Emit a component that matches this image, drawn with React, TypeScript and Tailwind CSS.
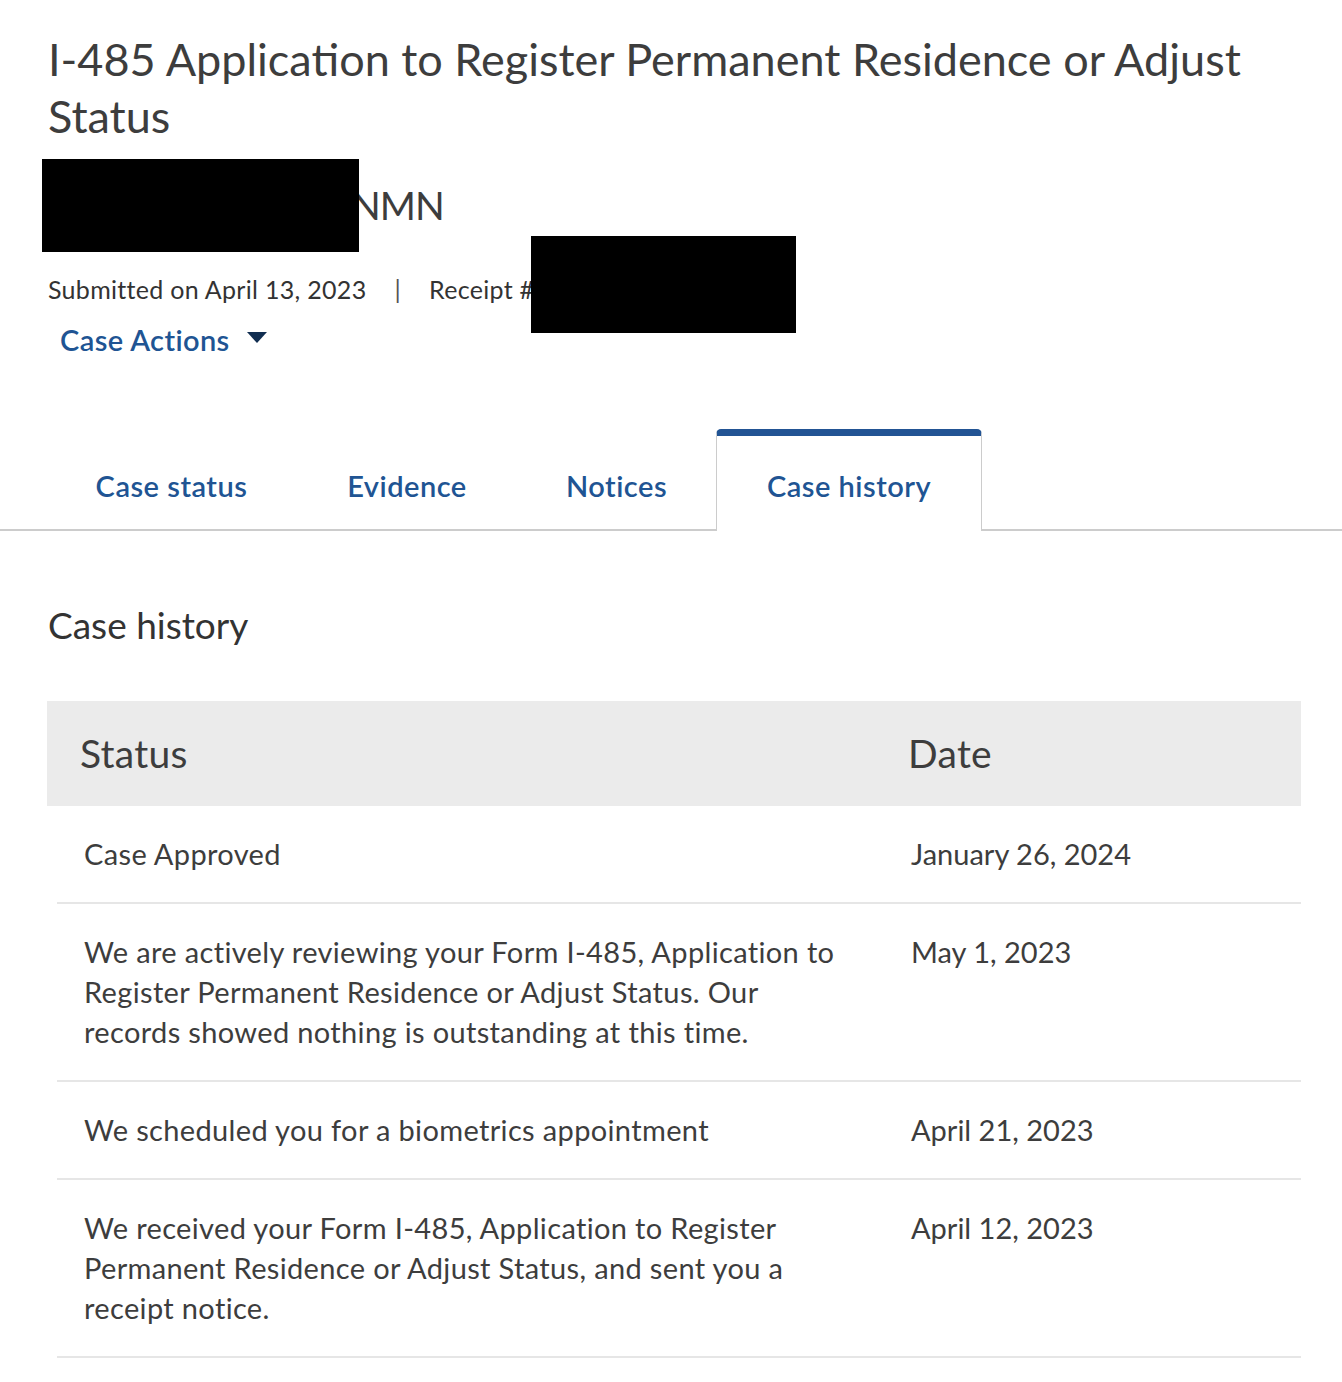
const rows = [
  { status: ["Case Approved"], date: "January 26, 2024" },
  {
    status: [
      "We are actively reviewing your Form I-485, Application to",
      "Register Permanent Residence or Adjust Status. Our",
      "records showed nothing is outstanding at this time.",
    ],
    date: "May 1, 2023",
  },
  { status: ["We scheduled you for a biometrics appointment"], date: "April 21, 2023" },
  {
    status: [
      "We received your Form I-485, Application to Register",
      "Permanent Residence or Adjust Status, and sent you a",
      "receipt notice.",
    ],
    date: "April 12, 2023",
  },
];

const tabs = [
  { label: "Case status", w: "w-[251px]" },
  { label: "Evidence", w: "w-[220px]" },
  { label: "Notices", w: "w-[199px]" },
];

const App = () => {
  return (
    <div className="min-h-screen w-full bg-white font-['Lato',sans-serif] text-[#3d3d3d]">
      {/* Header */}
      <div className="px-12 pt-[31px]">
        <h1 className="text-[45px] leading-[57px] font-normal">
          I-485 Application to Register Permanent Residence or Adjust
          <br />
          Status
        </h1>

        <div className="mt-[14px] flex items-center h-[93px] ml-[-6px]">
          <div className="w-[317px] h-[93px] bg-black relative z-10" />
          <span className="ml-[-8px] text-[39px] tracking-[-1px] leading-none">NMN</span>
        </div>

        <div className="relative mt-[22px] flex items-center text-[25px] tracking-[0.3px] leading-[30px] text-[#333]">
          <span>Submitted on April 13, 2023</span>
          <span className="mx-[28px] text-[#555]">|</span>
          <span>Receipt #</span>
          <div className="absolute left-[483px] top-[-38px] w-[265px] h-[97px] bg-black" />
        </div>

        <button className="mt-[18px] ml-[12px] flex items-center gap-[16px] text-[29px] tracking-[0.4px] font-semibold text-[#205493] leading-[36px]">
          Case Actions
          <svg width="22" height="12" viewBox="0 0 22 12" className="mt-[-4px]">
            <path d="M1 0 H21 L11 11 Z" fill="#112e51" />
          </svg>
        </button>
      </div>

      {/* Tabs */}
      <div className="mt-[71px] flex items-end border-b-2 border-[#cccccc] pl-[46px] h-[102px]">
        {tabs.map((t) => (
          <div
            key={t.label}
            className={`${t.w} h-[100px] flex items-center justify-center pt-[14px] text-[29px] tracking-[0.5px] font-semibold text-[#205493]`}
          >
            {t.label}
          </div>
        ))}
        <div className="w-[266px] h-[102px] mb-[-2px] bg-white rounded-t-[5px] border-t-[7px] border-x border-[#cccccc] border-t-[#225494] flex items-center justify-center pt-[4px] text-[29px] tracking-[0.5px] font-semibold text-[#205493]">
          Case history
        </div>
      </div>

      {/* Content */}
      <div className="px-12 pt-[72px] pb-10">
        <h2 className="text-[37px] leading-[44px] font-normal text-[#333]">Case history</h2>

        <div className="mt-[54px] ml-[-1px] w-[1254px]">
          <div className="h-[105px] bg-[#ebebeb] flex items-center text-[39px] tracking-[0.3px] text-[#3d3d3d]">
            <div className="w-[861px] pl-[33px]">Status</div>
            <div>Date</div>
          </div>

          {rows.map((r) => (
            <div
              key={r.date}
              className="ml-[10px] flex border-b-2 border-[#e6e6e6] py-[28px] text-[29px] tracking-[0.35px] leading-[40px] text-[#3d3d3d]"
            >
              <div className="w-[854px] pl-[27px]">
                {r.status.map((line) => (
                  <div key={line}>{line}</div>
                ))}
              </div>
              <div className="tracking-[0px]">{r.date}</div>
            </div>
          ))}
        </div>
      </div>
    </div>
  );
};

export default App;
